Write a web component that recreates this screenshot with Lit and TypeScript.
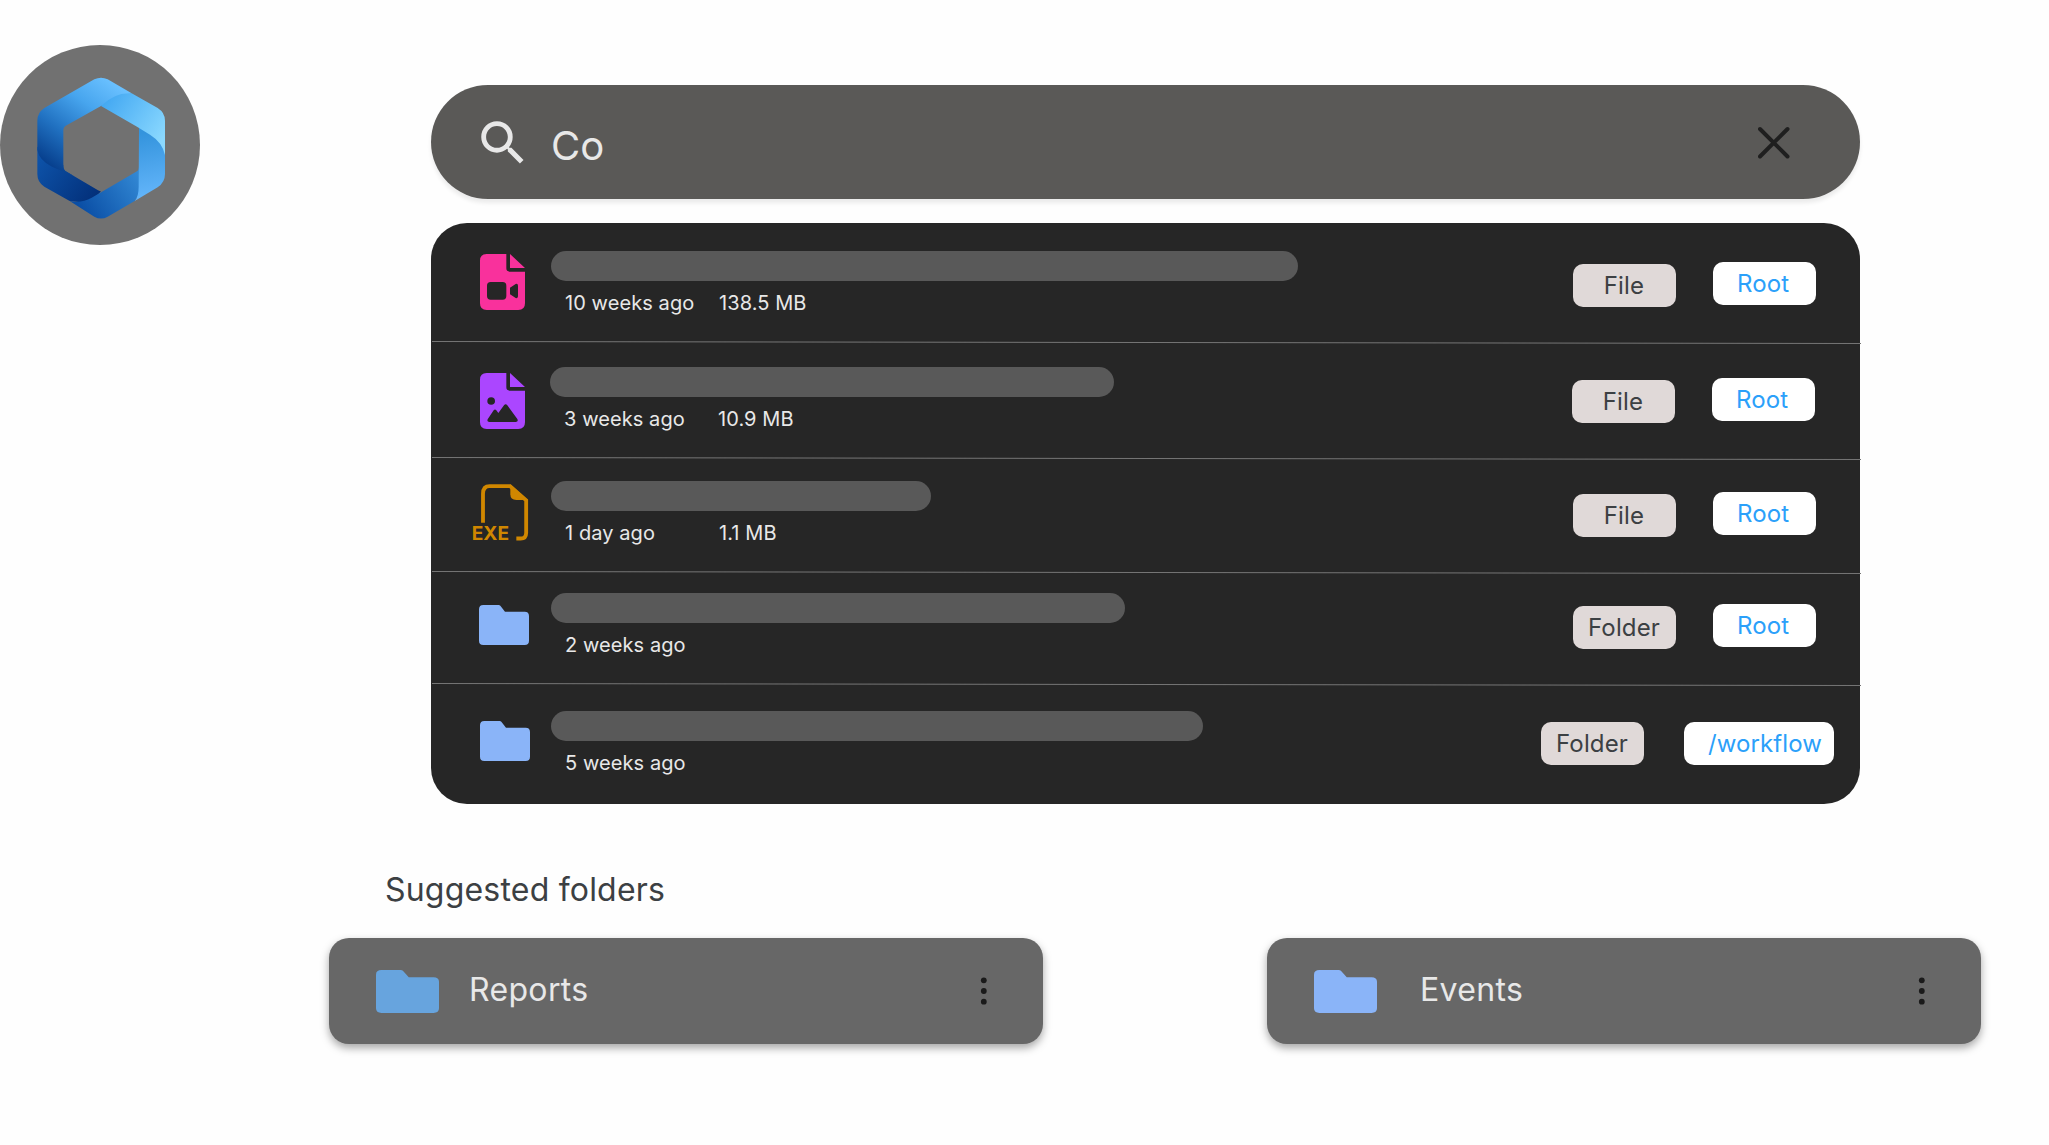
import { LitElement, html, css, svg, nothing, TemplateResult } from "lit";
import { customElement, property } from "lit/decorators.js";

interface Result {
  icon: string;
  age: string;
  size?: string;
  kind: string;
  place: string;
  width: number;
}

const results: Result[] = [
  { icon: "video", age: "10 weeks ago", size: "138.5 MB", kind: "File", place: "Root", width: 747 },
  { icon: "image", age: "3 weeks ago", size: "10.9 MB", kind: "File", place: "Root", width: 564 },
  { icon: "exe", age: "1 day ago", size: "1.1 MB", kind: "File", place: "Root", width: 380 },
  { icon: "folder", age: "2 weeks ago", kind: "Folder", place: "Root", width: 574 },
  { icon: "folder", age: "5 weeks ago", kind: "Folder", place: "/workflow", width: 652 },
];

const folderPath =
  "M13 0H59Q62 0 64 2L78 20H137Q150 20 150 33V107Q150 120 137 120H13Q0 120 0 107V13Q0 0 13 0Z";
const pagePath =
  "M20 0H79V43Q79 53 89 53H135V148Q135 168 115 168H20Q0 168 0 148V20Q0 0 20 0ZM90 0L135 42H90Z";

const icons: Record<string, TemplateResult> = {
  video: html`<svg width="45" height="56" viewBox="0 0 135 168">
    <path fill="#f9319c" d=${pagePath} />
    <path
      fill="#262626"
      d="M32 84H68Q79 84 79 95V126Q79 137 68 137H32Q21 137 21 126V95Q21 84 32 84ZM90 101L107 90Q114 88 114 95V127Q114 134 107 132L90 121Z"
    />
  </svg>`,
  image: html`<svg width="45" height="56" viewBox="0 0 135 168">
    <path fill="#ab46ff" d=${pagePath} />
    <circle cx="33.500" cy="84" r="11.500" fill="#262626" />
    <path
      fill="#262626"
      d="M28 147Q20 147 23 139L41 112Q45 107 49 112L55 120L72 97Q77 91 82 97L112 138Q116 147 107 147Z"
    />
  </svg>`,
  exe: html`<svg width="56" height="57" viewBox="0 0 168 171">
    <path
      fill="none"
      stroke="#d08700"
      stroke-width="11.500"
      d="M30 116V29Q30 6.500 50 6.500H111L159.500 49V146Q159.500 163.500 143 163.500H130"
    />
    <path fill="#d08700" d="M112 1L165 48H130Q112 48 112 31Z" />
    <text class="exe" x="-4" y="168" textLength="112" lengthAdjust="spacingAndGlyphs">EXE</text>
  </svg>`,
  folder: html`<svg width="50" height="40" viewBox="0 0 150 120">
    <path fill="#8ab4f8" d=${folderPath} />
  </svg>`,
};

@customElement("brand-logo")
export class BrandLogo extends LitElement {
  static styles = css`
    :host {
      display: block;
      width: 200px;
      height: 200px;
      border-radius: 50%;
      background: #717171;
      overflow: hidden;
    }
    svg {
      display: block;
    }
  `;

  render() {
    return html`<svg width="200" height="200" viewBox="0 45 600 600">
      <defs>
        <linearGradient id="left" gradientUnits="userSpaceOnUse" x1="340" y1="160" x2="150" y2="420">
          <stop offset="0" stop-color="#69c0ff" />
          <stop offset=".3" stop-color="#47a5ee" />
          <stop offset=".65" stop-color="#2070c0" />
          <stop offset="1" stop-color="#043a88" />
        </linearGradient>
        <linearGradient id="top" gradientUnits="userSpaceOnUse" x1="320" y1="200" x2="495" y2="320">
          <stop offset="0" stop-color="#43a8f2" />
          <stop offset="1" stop-color="#8bd9ff" />
        </linearGradient>
        <linearGradient id="right" gradientUnits="userSpaceOnUse" x1="425" y1="310" x2="460" y2="500">
          <stop offset="0" stop-color="#3494dd" />
          <stop offset="1" stop-color="#63b5fa" />
        </linearGradient>
        <linearGradient id="base" gradientUnits="userSpaceOnUse" x1="420" y1="440" x2="250" y2="550">
          <stop offset="0" stop-color="#3288d4" />
          <stop offset="1" stop-color="#0a4ea5" />
        </linearGradient>
        <linearGradient id="deep" gradientUnits="userSpaceOnUse" x1="115" y1="390" x2="280" y2="510">
          <stop offset="0" stop-color="#0d52a8" />
          <stop offset="1" stop-color="#03307a" />
        </linearGradient>
      </defs>
      <path
        fill="url(#deep)"
        d="M112 350L190 405Q190 419 196 423L294 481Q299 484 303 484L270 520L209 513L133 470Q112 457 112 432Z"
      />
      <path
        fill="url(#left)"
        d="M283 148Q303 139 323 148L395 190L303 228L196 288Q190 292 190 300V412Q190 419 196 423L222 438L156 410Q118 392 112 360V272Q112 248 133 234Z"
      />
      <path
        fill="url(#base)"
        d="M209 513Q245 520 275 503L411 424Q417 420 417 412L450 440L404 513L323 560Q303 571 283 560Z"
      />
      <path
        fill="url(#right)"
        d="M417 294L440 290L495 350V432Q495 457 473 472L404 513Q416 500 416 470Z"
      />
      <path
        fill="url(#top)"
        d="M303 228Q345 186 395 190L473 234Q495 248 495 272V375Q487 337 450 314L411 290Z"
      />
    </svg>`;
  }
}

@customElement("search-field")
export class SearchField extends LitElement {
  static styles = css`
    :host {
      display: flex;
      box-sizing: border-box;
      width: 1429px;
      height: 114px;
      padding: 0 70px 0 43px;
      border-radius: 57px;
      background: #5a5957;
      box-shadow: 0 4px 4px rgba(0, 0, 0, 0.08);
      justify-content: space-between;
      align-items: flex-start;
    }
    .query {
      display: flex;
      align-items: flex-start;
      gap: 19px;
    }
    .glass {
      margin-top: 29px;
    }
    .text {
      margin-top: 37px;
      font: 400 40px/48px Inter, sans-serif;
      color: #e8e8e8;
    }
    .clear {
      margin-top: 41px;
    }
  `;

  render() {
    return html`<div class="query">
        <svg class="glass" width="58" height="58" viewBox="0 0 24 24">
          <path
            fill="#e8e8e8"
            d="M15.500 14h-.79l-.28-.27A6.471 6.471 0 0 0 16 9.500 6.500 6.500 0 1 0 9.500 16c1.610 0 3.090-.59 4.230-1.570l.27.28v.79l5 4.990L20.490 19l-4.990-5zm-6 0C7.010 14 5 11.990 5 9.500S7.010 5 9.500 5 14 7.010 14 9.500 11.990 14 9.500 14z"
          />
        </svg>
        <span class="text">Co</span>
      </div>
      <svg class="clear" width="32" height="33" viewBox="0 0 32 33">
        <path d="M2 3L29.500 30.500M29.500 3L2 30.500" stroke="#1f1f1f" stroke-width="4" stroke-linecap="round" />
      </svg>`;
  }
}

@customElement("result-row")
export class ResultRow extends LitElement {
  @property({ attribute: false }) item!: Result;
  @property({ type: Boolean }) last = false;

  static styles = css`
    :host {
      display: block;
      position: relative;
    }
    .row {
      display: flex;
      align-items: flex-start;
      justify-content: space-between;
    }
    .lead {
      display: flex;
      align-items: flex-start;
    }
    .icon {
      box-sizing: border-box;
      width: 120px;
      padding-left: 49px;
    }
    .icon svg {
      display: block;
      overflow: visible;
    }
    .icon.video {
      padding-top: 3px;
    }
    .icon.image {
      width: 119px;
      padding-top: 6px;
    }
    .icon.exe {
      padding-left: 42px;
      padding-top: 3px;
    }
    .icon.folder {
      padding-left: 48px;
      padding-top: 12px;
    }
    .icon.last {
      padding-left: 49px;
      padding-top: 10px;
    }
    .icon .exe {
      font-family: Inter, sans-serif;
      font-weight: 700;
      font-size: 58px;
      fill: #d08700;
    }
    .bar {
      height: 30px;
      border-radius: 15px;
      background: #595959;
    }
    .meta {
      display: flex;
      padding-left: 14px;
      margin-top: 9px;
      font: 420 20px/26px Inter, sans-serif;
      letter-spacing: 0.08px;
      color: #e8e8e8;
      white-space: nowrap;
    }
    .age {
      width: 154px;
    }
    .tags {
      display: flex;
      align-items: flex-start;
      gap: 37px;
      padding: 11px 44px 0 0;
    }
    .tags.image {
      padding-right: 45px;
    }
    .tags.last {
      gap: 40px;
      padding-right: 26px;
    }
    .tag {
      box-sizing: border-box;
      width: 103px;
      height: 43px;
      border-radius: 10px;
      font: 400 24px/43px Inter, sans-serif;
      white-space: nowrap;
    }
    .kind {
      margin-top: 2px;
      background: #e0d9d8;
      color: #3c4043;
      font-weight: 430;
      letter-spacing: 0.15px;
      text-align: center;
      padding-right: 1px;
    }
    .place {
      background: #fff;
      color: #2ba0fa;
      padding-left: 24px;
      letter-spacing: 0.1px;
    }
    .last .kind {
      margin-top: 0;
    }
    .last .place {
      width: 150px;
    }
    .line {
      position: absolute;
      left: 1px;
      bottom: -2px;
    }
  `;

  render() {
    const { icon, age, size, kind, place, width } = this.item;
    const end = this.last ? "last" : "";
    return html`<div class="row">
        <div class="lead">
          <div class="icon ${icon} ${end}">${icons[icon]}</div>
          <div>
            <div class="bar" style="width:${width}px"></div>
            <div class="meta"><span class="age">${age}</span>${size ? html`<span>${size}</span>` : nothing}</div>
          </div>
        </div>
        <div class="tags ${icon} ${end}">
          <span class="tag kind">${kind}</span>
          <span class="tag place">${place}</span>
        </div>
      </div>
      ${this.last
        ? nothing
        : html`<svg class="line" width="1429" height="3" viewBox="0 0 1429 3">
            ${svg`<path d="M0 0.500L1429 2.500" stroke="#767676" stroke-width="1" />`}
          </svg>`}`;
  }
}

@customElement("folder-card")
export class FolderCard extends LitElement {
  @property() name = "";
  @property() tint = "#8ab4f8";

  static styles = css`
    :host {
      display: flex;
      box-sizing: border-box;
      width: 714px;
      height: 106px;
      padding: 0 56px 0 47px;
      border-radius: 20px;
      background: #676767;
      box-shadow: 0 4px 8px rgba(0, 0, 0, 0.35);
      align-items: center;
      justify-content: space-between;
    }
    .label {
      display: flex;
      align-items: center;
      font: 430 32px/40px Inter, sans-serif;
      letter-spacing: 0.33px;
      color: #e8e8e8;
    }
    .label svg {
      margin-top: 1px;
    }
    .name {
      margin-left: 30px;
      margin-top: -2px;
    }
    .name.far {
      margin-left: 43px;
    }
  `;

  render() {
    return html`<div class="label">
        <svg width="63" height="43" viewBox="0 0 150 120" preserveAspectRatio="none">
          <path fill=${this.tint} d=${folderPath} />
        </svg>
        <span class="name ${this.name === "Events" ? "far" : ""}">${this.name}</span>
      </div>
      <svg width="7" height="28" viewBox="0 0 7 28" fill="#1a1a1a">
        <circle cx="3.800" cy="3.300" r="2.900" />
        <circle cx="3.800" cy="14" r="2.900" />
        <circle cx="3.800" cy="24.700" r="2.900" />
      </svg>`;
  }
}

@customElement("app-root")
export class AppRoot extends LitElement {
  static styles = css`
    :host {
      display: block;
      box-sizing: border-box;
      width: 2049px;
      height: 1145px;
      background: #fefefe;
      overflow: hidden;
    }
    .top {
      display: flex;
      align-items: flex-start;
    }
    brand-logo {
      margin-top: 45px;
    }
    .search {
      display: flex;
      flex-direction: column;
      gap: 24px;
      margin: 85px 0 0 231px;
    }
    .panel {
      display: grid;
      grid-template-rows: 119px 116px 114px 112px 120px;
      border-radius: 36px;
      background: #262626;
    }
    result-row {
      padding-top: 28px;
    }
    result-row:nth-child(2) {
      padding-top: 25px;
    }
    result-row:nth-child(3) {
      padding-top: 23px;
    }
    result-row:nth-child(4) {
      padding-top: 21px;
    }
    result-row:nth-child(5) {
      padding-top: 27px;
    }
    .title {
      margin: 66px 0 0 385px;
      font: 430 32px/40px Inter, sans-serif;
      letter-spacing: 0.2px;
      color: #3c4043;
    }
    .cards {
      display: flex;
      gap: 224px;
      margin: 28px 0 0 329px;
    }
  `;

  render() {
    return html`<div class="top">
        <brand-logo></brand-logo>
        <div class="search">
          <search-field></search-field>
          <div class="panel">
            ${results.map(
              (item, i) => html`<result-row .item=${item} ?last=${i === results.length - 1}></result-row>`
            )}
          </div>
        </div>
      </div>
      <div class="title">Suggested folders</div>
      <div class="cards">
        <folder-card name="Reports" tint="#67a4de"></folder-card>
        <folder-card name="Events"></folder-card>
      </div>`;
  }
}
